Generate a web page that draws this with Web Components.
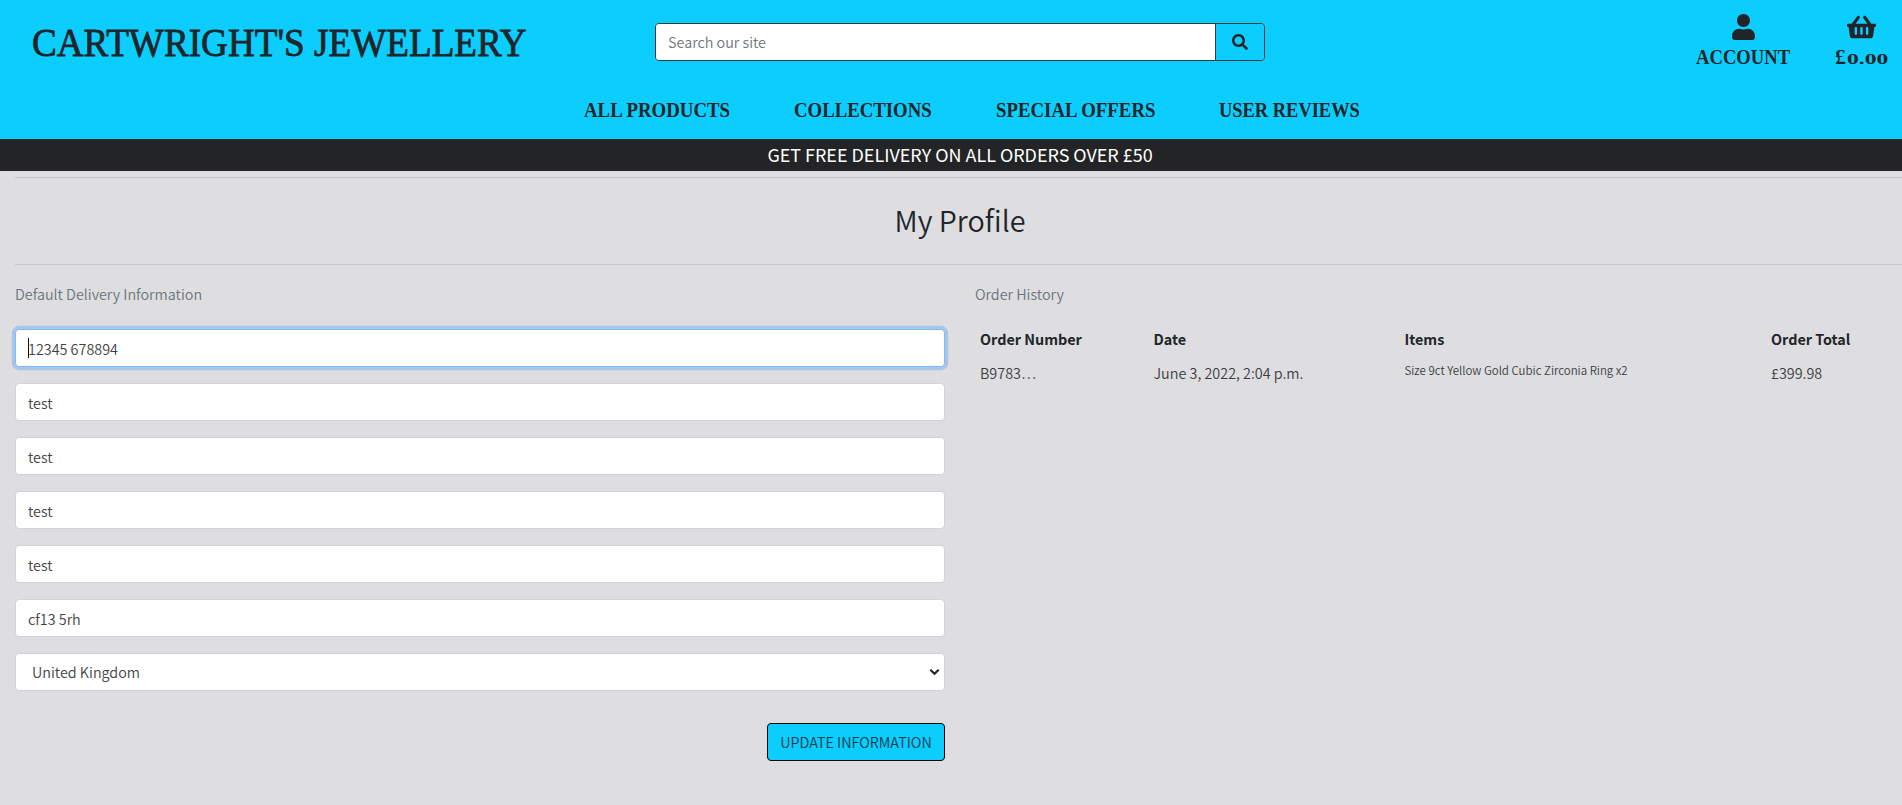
<!DOCTYPE html>
<html lang="en">
<head>
<meta charset="utf-8">
<title>Cartwright's Jewellery</title>
<style>
html,body{margin:0;height:100%;overflow:hidden;background:#dedee0}
body{font:350 14.370px/24px "Noto Sans CJK JP","Noto Sans",sans-serif;color:#212529}
</style>
</head>
<body>
<store-page></store-page>
<script>
const define = (name, html, ready) => customElements.define(name, class extends HTMLElement {
  constructor() {
    super();
    this.attachShadow({ mode: 'open' }).innerHTML = html;
  }
  connectedCallback() { if (ready) ready(this, this.shadowRoot); }
});

// Display text condensed or widened to occupy a given width
define('display-text', `<style>
:host{display:block;white-space:nowrap;font-family:"Liberation Serif",serif;color:#212529;width:var(--w)}
span{display:inline-block;transform-origin:0 50%}
</style><span><slot></slot></span>`, (el, root) => {
  const w = +el.getAttribute('width');
  el.style.setProperty('--w', w + 'px');
  const s = root.querySelector('span');
  s.style.transform = 'scaleX(' + w / s.offsetWidth + ')';
});

define('search-box', `<style>
:host{display:flex;box-sizing:border-box;width:610px;height:38px;border:1px solid #343a40;border-radius:4px;overflow:hidden}
input{flex:1;min-width:0;border:0;padding:0 12px;font:inherit;background:#fff;outline:0}
input::placeholder{color:#6c757d;opacity:1}
button{width:49px;padding:0;border:0;border-left:1px solid #343a40;background:#0bceff;display:grid;place-items:center}
</style><input placeholder="Search our site"><button aria-label="Search"><svg width="16" height="16" viewBox="0 0 512 512" fill="#212529"><path d="M505 442.7L405.300 343c-4.500-4.500-10.600-7-17-7H372c27.600-35.300 44-79.700 44-128C416 93.100 322.900 0 208 0S0 93.100 0 208s93.100 208 208 208c48.300 0 92.700-16.400 128-44v16.300c0 6.400 2.500 12.500 7 17l99.700 99.700c9.400 9.400 24.600 9.400 33.900 0l28.300-28.300c9.400-9.400 9.400-24.600.1-34zM208 336c-70.700 0-128-57.200-128-128 0-70.700 57.200-128 128-128 70.700 0 128 57.200 128 128 0 70.700-57.200 128-128 128z"/></svg></button>`);

define('site-header', `<style>
:host{display:block;height:139px;background:#0bceff}
.top{display:grid;grid-template-columns:655px 610px 1fr;height:85px}
.brand{padding:13px 0 0 31.500px;font-size:40px;line-height:60px;-webkit-text-stroke:.8px}
search-box{margin-top:23px}
.links{display:flex;justify-content:flex-end;gap:45px;padding:14px 32px 0 0}
.link{display:flex;flex-direction:column;align-items:center}
.link svg{display:block;height:26px}
.link display-text,nav display-text{font-size:20px;font-weight:bold}
.link display-text{line-height:30px;margin-top:2px}
.price{display:flex;align-items:baseline;gap:1px}
.price display-text:last-child{font-size:15px}
nav{display:flex;gap:64px;padding-left:584px}
nav display-text{line-height:50px}
</style>
<div class="top">
<div class="brand"><display-text width="495">CARTWRIGHT'S JEWELLERY</display-text></div>
<search-box></search-box>
<div class="links">
<div class="link"><svg width="23" viewBox="0 0 448 512" fill="#212529"><path d="M224 256c70.700 0 128-57.300 128-128S294.700 0 224 0 96 57.300 96 128s57.300 128 128 128zm89.600 32h-16.700c-22.200 10.200-46.900 16-72.900 16s-50.600-5.800-72.900-16h-16.700C60.200 288 0 348.200 0 422.400V464c0 26.500 21.500 48 48 48h352c26.500 0 48-21.500 48-48v-41.600c0-74.200-60.200-134.400-134.400-134.400z"/></svg><display-text width="94">ACCOUNT</display-text></div>
<div class="link"><svg width="29" viewBox="0 0 576 512" fill="#212529"><path d="M576 216v16c0 13.255-10.745 24-24 24h-8l-26.113 182.788C514.509 462.435 494.257 480 470.370 480H105.630c-23.887 0-44.139-17.565-47.518-41.212L32 256h-8c-13.255 0-24-10.745-24-24v-16c0-13.255 10.745-24 24-24h67.341l106.780-146.821c10.395-14.292 30.407-17.453 44.701-7.058 14.293 10.395 17.453 30.408 7.058 44.701L170.477 192h235.046L326.120 82.821c-10.395-14.292-7.234-34.306 7.059-44.701 14.291-10.395 34.306-7.235 44.701 7.058L484.659 192H552c13.255 0 24 10.745 24 24zM312 392V280c0-13.255-10.745-24-24-24s-24 10.745-24 24v112c0 13.255 10.745 24 24 24s24-10.745 24-24zm112 0V280c0-13.255-10.745-24-24-24s-24 10.745-24 24v112c0 13.255 10.745 24 24 24s24-10.745 24-24zm-224 0V280c0-13.255-10.745-24-24-24s-24 10.745-24 24v112c0 13.255 10.745 24 24 24s24-10.745 24-24z"/></svg><div class="price"><display-text width="11">£</display-text><display-text width="41">0.00</display-text></div></div>
</div></div>
<nav><display-text width="146">ALL PRODUCTS</display-text><display-text width="138">COLLECTIONS</display-text><display-text width="159">SPECIAL OFFERS</display-text><display-text width="141">USER REVIEWS</display-text></nav>`);

define('delivery-banner', `<style>
:host{display:block;box-sizing:border-box;height:32px;line-height:30px;background:#222426;color:#fff;text-align:center;font-size:17.950px;font-weight:400}
</style><slot></slot>`);

define('form-field', `<style>
:host{display:block;height:38px;margin-bottom:16px}
input{display:block;box-sizing:border-box;width:100%;height:38px;border:1px solid #ced4da;border-radius:4px;padding:0 12px;background:#fff;font:inherit;color:#3f4347;outline:0}
.caret{display:none}
:host([active]){display:grid}
:host([active]) input,:host([active]) .caret{grid-area:1/1}
:host([active]) input{border-color:#80bdff;box-shadow:0 0 0 3.200px rgba(0,123,255,.25)}
:host([active]) .caret{display:block;width:1px;height:20px;margin:9px 0 0 13px;background:#111;z-index:1}
</style><input><span class="caret"></span>`, (el, root) => { root.querySelector('input').value = el.getAttribute('value'); });

define('country-field', `<style>
:host{display:flex;box-sizing:border-box;height:38px;border:1px solid #ced4da;border-radius:4px;background:#fff;color:#3f4347;align-items:center;justify-content:space-between;padding:0 4px 0 16px}
</style><slot></slot><svg width="11" height="8" viewBox="0 0 11 8" fill="none" stroke="#212529" stroke-width="2.200"><path d="M1.300 1.700 5.500 5.800 9.700 1.700"/></svg>`);

define('action-button', `<style>
:host{display:block}
button{display:block;box-sizing:border-box;width:178px;height:38px;padding:0;background:#0bceff;border:1px solid #000;border-radius:4px;font:inherit;color:#053a4a;white-space:nowrap}
</style><button><slot></slot></button>`);

define('order-history', `<style>
:host{display:block}
.row{display:grid;grid-template-columns:173.500px 251px 366.500px 1fr;padding-left:5px}
.head{font-weight:bold;height:34px}
.row:last-child{color:#3a3d40}
.item{font-size:11.480px;line-height:19px}
</style><div class="row head"><span>Order Number</span><span>Date</span><span>Items</span><span>Order Total</span></div>
<div class="row"><span>B9783…</span><span>June 3, 2022, 2:04 p.m.</span><span class="item">Size 9ct Yellow Gold Cubic Zirconia Ring x2</span><span>£399.98</span></div>`);

define('store-page', `<style>
:host{display:block;width:1920px}
main{padding:6px 15px 0}
.title{height:86px;border:solid #c5c6c8;border-width:1px 0;box-sizing:content-box}
h2{margin:0;text-align:center;font-size:28.800px;font-weight:350;line-height:38px;padding-top:23px}
.cols{display:grid;grid-template-columns:930px 930px;gap:30px;padding-top:17px}
.label{margin:0 0 23px;color:#6c757d}
action-button{display:flex;justify-content:flex-end;margin-top:32px}
order-history{margin-top:-2px}
</style>
<site-header></site-header>
<delivery-banner>GET FREE DELIVERY ON ALL ORDERS OVER £50</delivery-banner>
<main><div class="title"><h2>My Profile</h2></div>
<div class="cols"><section><p class="label">Default Delivery Information</p>
<form-field active value="12345 678894"></form-field><form-field value="test"></form-field><form-field value="test"></form-field><form-field value="test"></form-field><form-field value="test"></form-field><form-field value="cf13 5rh"></form-field>
<country-field>United Kingdom</country-field><action-button>UPDATE INFORMATION</action-button></section>
<section><p class="label">Order History</p><order-history></order-history></section></div></main>`);
</script>
</body>
</html>
